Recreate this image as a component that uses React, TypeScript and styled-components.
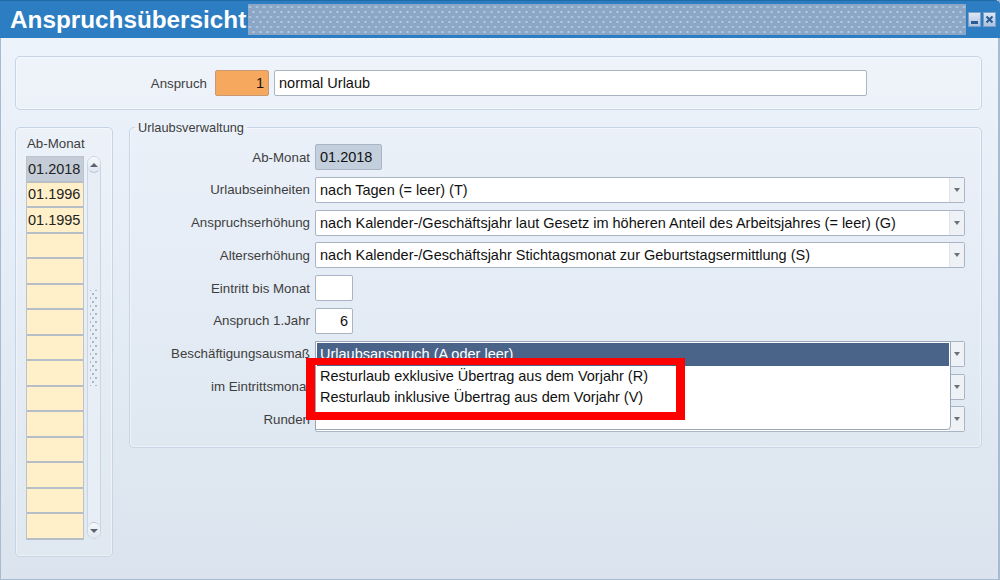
import styled, { createGlobalStyle } from "styled-components";

const GlobalStyle = createGlobalStyle`
  html, body {
    margin: 0;
    padding: 0;
  }
  body {
    font-family: "Liberation Sans", Arial, sans-serif;
    background: #dde6f0;
  }
  * {
    box-sizing: border-box;
  }
`;

const Window = styled.div`
  width: 1000px;
  height: 580px;
  display: flex;
  flex-direction: column;
  background: linear-gradient(#eef4fc, #dbe4ee);
  box-shadow: inset 1px 0 0 #a9bbd0, inset -2px 0 0 #a9bbd0, inset 0 -1px 0 #a9bbd0;
  overflow: hidden;
`;

const TitleBar = styled.div`
  height: 38px;
  flex-shrink: 0;
  display: flex;
  align-items: center;
  padding: 0 4px 0 10px;
  background: #2c7dc2;
  border-top: 1px solid #1f6aa9;
  border-radius: 0 5px 0 0;
`;

const Title = styled.h1`
  margin: 0;
  font-size: 24.3px;
  font-weight: bold;
  color: #fff;
  white-space: nowrap;
`;

const Pattern = styled.div`
  flex: 1;
  height: 31px;
  margin-left: 2px;
  background-color: #8ca6c6;
  background-image: radial-gradient(circle, #b3cdea 0.9px, transparent 1.3px),
    radial-gradient(circle, #b3cdea 0.9px, transparent 1.3px);
  background-size: 7px 10px;
  background-position: 2px 3px, 5.5px 8px;
`;

const WinButton = styled.div`
  width: 13px;
  height: 15px;
  margin-left: 2px;
  display: flex;
  align-items: center;
  justify-content: center;
  background: linear-gradient(#dbe7f5, #abc3e0);
  border: 1px solid #7f9fc6;
`;

const Content = styled.div`
  flex: 1;
  display: flex;
  flex-direction: column;
  gap: 17px;
  padding: 18px 18px 0 15px;
`;

const Panel = styled.div`
  border: 1px solid #c6d4e5;
  border-radius: 5px;
  background: rgba(255, 255, 255, 0.12);
  box-shadow: inset 0 0 0 1px rgba(255, 255, 255, 0.45);
`;

const TopPanel = styled(Panel)`
  height: 54px;
  display: flex;
  align-items: center;
`;

const Label = styled.span<{ $width?: number }>`
  width: ${(p) => (p.$width ? `${p.$width}px` : "auto")};
  text-align: right;
  font-size: 13.3px;
  color: #3e3e3e;
  white-space: nowrap;
`;

const Field = styled.div<{ $width: number; $bg?: string; $align?: string }>`
  width: ${(p) => p.$width}px;
  height: 26px;
  display: flex;
  align-items: center;
  justify-content: ${(p) => p.$align || "flex-start"};
  padding: 0 4px 0 4px;
  font-size: 14.5px;
  color: #111;
  background: ${(p) => p.$bg || "#fff"};
  border: 1px solid #a9b5c4;
  border-radius: 2px;
  white-space: nowrap;
`;

const AnspruchRow = styled.div`
  display: flex;
  align-items: center;
`;

const Lower = styled.div`
  display: flex;
  gap: 16px;
  align-items: flex-start;
`;

const LeftPanel = styled(Panel)`
  width: 98px;
  height: 430px;
  padding: 8px 0 0 10px;
`;

const ListLabel = styled.div`
  font-size: 13.3px;
  color: #3e3e3e;
  margin-bottom: 5px;
  padding-left: 1px;
`;

const ListWrap = styled.div`
  display: flex;
  gap: 3px;
`;

const Rows = styled.div`
  width: 58px;
  border: 1px solid #bcc3cb;
  border-bottom: none;
`;

const ListRow = styled.div<{ $selected?: boolean }>`
  height: 25.5px;
  display: flex;
  align-items: center;
  padding-left: 1px;
  font-size: 14.5px;
  color: #222;
  background: ${(p) => (p.$selected ? "#c4ccd7" : "#fff0c9")};
  border-bottom: 2px solid #b8bec6;
`;

const Scrollbar = styled.div`
  width: 14px;
  height: 383px;
  display: flex;
  flex-direction: column;
  align-items: center;
  background: #e8eef6;
  border: 1px solid #cbd6e3;
  border-radius: 7px;
`;

const ScrollBtn = styled.div<{ $down?: boolean }>`
  width: 12px;
  height: 16px;
  display: flex;
  align-items: center;
  justify-content: center;
  border-radius: 6px;
  background: linear-gradient(#f6f9fc, #dfe7f0);
  border-${(p) => (p.$down ? "top" : "bottom")}: 1px solid #b9c6d6;
  margin-${(p) => (p.$down ? "top" : "bottom")}: auto;
  &::after {
    content: "";
    border-left: 4px solid transparent;
    border-right: 4px solid transparent;
    ${(p) => (p.$down ? "border-top" : "border-bottom")}: 4px solid #5d6470;
  }
`;

const Grip = styled.div`
  width: 8px;
  height: 96px;
  margin-top: -20px;
  background-image: radial-gradient(circle, #a9b6c6 0.9px, transparent 1.3px),
    radial-gradient(circle, #a9b6c6 0.9px, transparent 1.3px);
  background-size: 6px 8px;
  background-position: 0 0, 3px 4px;
`;

const Fieldset = styled.fieldset`
  width: 853px;
  height: 328px;
  margin: -7px 0 0 0;
  padding: 9px 15px 0 0;
  border: 1px solid #c6d4e5;
  border-radius: 5px;
  min-width: 0;
  box-shadow: inset 0 0 0 1px rgba(255, 255, 255, 0.45);
`;

const Legend = styled.legend`
  margin-left: 5px;
  padding: 0 3px;
  font-size: 12.8px;
  color: #3e3e3e;
`;

const FormGrid = styled.div`
  display: grid;
  grid-template-columns: 180px 650px;
  grid-auto-rows: 26px;
  column-gap: 5px;
  row-gap: 6.8px;
  align-items: center;
`;

const SelectWrap = styled.div`
  position: relative;
  height: 26px;
`;

const SelectBox = styled.div`
  height: 26px;
  display: flex;
  background: #fff;
  border: 1px solid #a9b5c4;
  border-radius: 2px;
`;

const SelectValue = styled.div`
  flex: 1;
  display: flex;
  align-items: center;
  padding-left: 4px;
  font-size: 14.5px;
  color: #111;
  white-space: nowrap;
  overflow: hidden;
`;

const Arrow = styled.div`
  width: 15px;
  display: flex;
  align-items: center;
  justify-content: center;
  background: #eef1f5;
  border-left: 1px solid #dde3ea;
  &::after {
    content: "";
    border-left: 3.5px solid transparent;
    border-right: 3.5px solid transparent;
    border-top: 4px solid #6a717b;
  }
`;

const Popup = styled.div`
  position: absolute;
  top: 0;
  left: 0;
  width: 636px;
  height: 89px;
  z-index: 2;
  padding: 1px;
  background: #fff;
  border: 1px solid #9aa7b7;
  border-radius: 0 0 4px 0;
`;

const Option = styled.div<{ $active?: boolean }>`
  height: ${(p) => (p.$active ? 23 : 21)}px;
  display: flex;
  align-items: center;
  padding-left: 3px;
  font-size: 14.5px;
  white-space: nowrap;
  color: ${(p) => (p.$active ? "#fff" : "#111")};
  background: ${(p) => (p.$active ? "#4a6389" : "transparent")};
`;

const Highlight = styled.div`
  position: absolute;
  left: -10px;
  top: 16px;
  width: 379px;
  height: 62px;
  border: 8px solid #ff0000;
  border-width: 7px 9px 8px 9px;
  z-index: 3;
`;

const months = ["01.2018", "01.1996", "01.1995"];

function Select({ value }: { value: string }) {
  return (
    <SelectBox>
      <SelectValue>{value}</SelectValue>
      <Arrow />
    </SelectBox>
  );
}

export default function App() {
  const rows = Array.from({ length: 15 }, (_, i) => months[i] || "");
  return (
    <Window>
      <GlobalStyle />
      <TitleBar>
        <Title>Anspruchsübersicht</Title>
        <Pattern />
        <WinButton>
          <svg width="9" height="11" viewBox="0 0 9 11">
            <rect x="1" y="7" width="7" height="3" fill="#2a5b94" />
          </svg>
        </WinButton>
        <WinButton>
          <svg width="9" height="11" viewBox="0 0 9 11">
            <path d="M1.5 2.5 L7.5 8.5 M7.5 2.5 L1.5 8.5" stroke="#2a5b94" strokeWidth="2" />
          </svg>
        </WinButton>
      </TitleBar>
      <Content>
        <TopPanel>
          <AnspruchRow>
            <Label $width={191}>Anspruch</Label>
            <Field $width={54} $bg="#f6a95e" $align="flex-end" style={{ marginLeft: 8, borderColor: "#c79a72" }}>
              1
            </Field>
            <Field $width={593} style={{ marginLeft: 5 }}>
              normal Urlaub
            </Field>
          </AnspruchRow>
        </TopPanel>
        <Lower>
          <LeftPanel>
            <ListLabel>Ab-Monat</ListLabel>
            <ListWrap>
              <Rows>
                {rows.map((m, i) => (
                  <ListRow key={i} $selected={i === 0}>
                    {m}
                  </ListRow>
                ))}
              </Rows>
              <Scrollbar>
                <ScrollBtn />
                <Grip />
                <ScrollBtn $down />
              </Scrollbar>
            </ListWrap>
          </LeftPanel>
          <Fieldset>
            <Legend>Urlaubsverwaltung</Legend>
            <FormGrid>
              <Label>Ab-Monat</Label>
              <Field $width={67} $bg="#c3cfdc">01.2018</Field>

              <Label>Urlaubseinheiten</Label>
              <Select value="nach Tagen (= leer) (T)" />

              <Label>Anspruchserhöhung</Label>
              <Select value="nach Kalender-/Geschäftsjahr laut Gesetz im höheren Anteil des Arbeitsjahres (= leer) (G)" />

              <Label>Alterserhöhung</Label>
              <Select value="nach Kalender-/Geschäftsjahr Stichtagsmonat zur Geburtstagsermittlung (S)" />

              <Label>Eintritt bis Monat</Label>
              <Field $width={38} />

              <Label>Anspruch 1.Jahr</Label>
              <Field $width={38} $align="flex-end">6</Field>

              <Label>Beschäftigungsausmaß</Label>
              <SelectWrap>
                <Select value="" />
                <Popup>
                  <Option $active>Urlaubsanspruch (A oder leer)</Option>
                  <Option>Resturlaub exklusive Übertrag aus dem Vorjahr (R)</Option>
                  <Option>Resturlaub inklusive Übertrag aus dem Vorjahr (V)</Option>
                  <Highlight />
                </Popup>
              </SelectWrap>

              <Label>im Eintrittsmonat</Label>
              <Select value="" />

              <Label>Runden</Label>
              <Select value="" />
            </FormGrid>
          </Fieldset>
        </Lower>
      </Content>
    </Window>
  );
}
